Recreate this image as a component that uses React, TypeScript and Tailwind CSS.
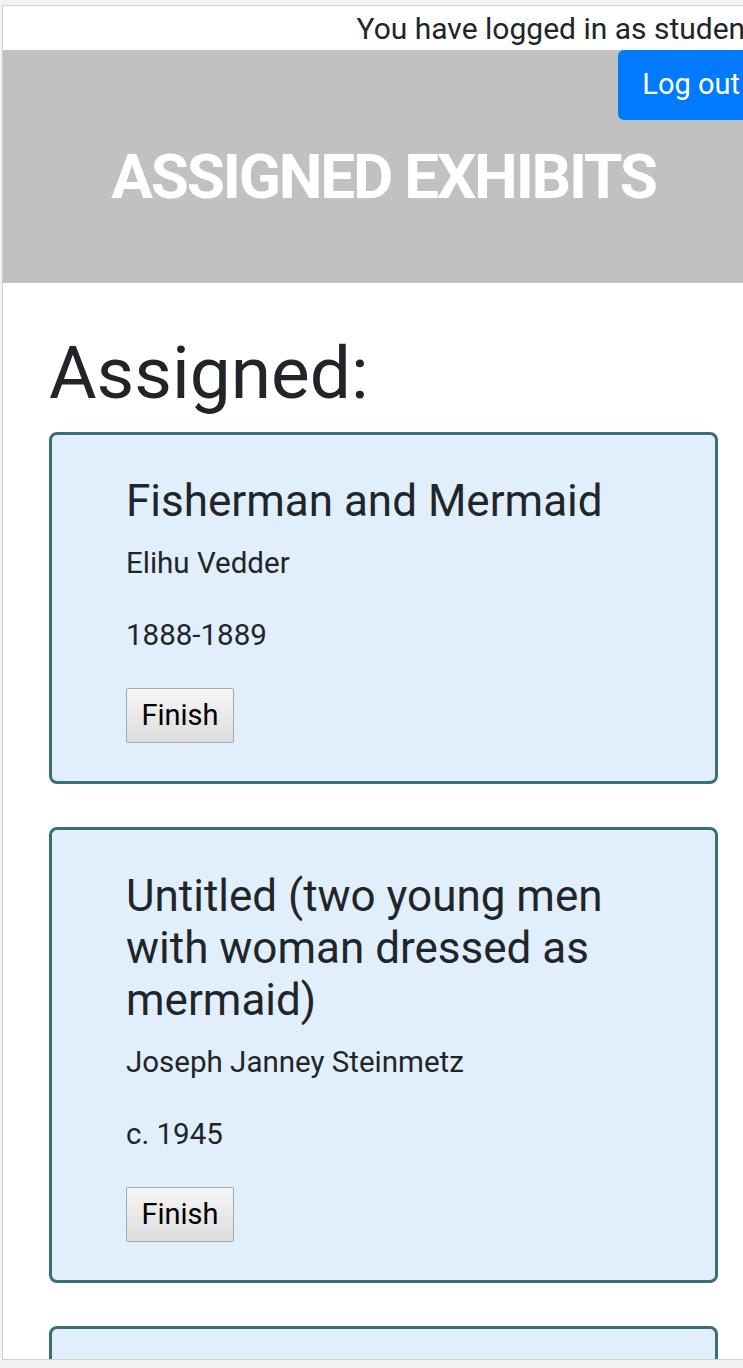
import React from "react";

interface Exhibit {
  title: string;
  artist: string;
  date: string;
}

const exhibits: Exhibit[] = [
  { title: "Fisherman and Mermaid", artist: "Elihu Vedder", date: "1888-1889" },
  {
    title: "Untitled (two young men with woman dressed as mermaid)",
    artist: "Joseph Janney Steinmetz",
    date: "c. 1945",
  },
  { title: "Mermaid", artist: "Unknown", date: "n.d." },
];

const ExhibitCard: React.FC<{ exhibit: Exhibit }> = ({ exhibit }) => (
  <div className="rounded-[8px] border-[3px] border-[#3a6e79] bg-[#e1effd] pt-[40px] pb-[38px] pl-[74px] pr-[70px]">
    <h2 className="mb-[14px] text-[44px] leading-[52px] font-normal text-[#212529]">
      {exhibit.title}
    </h2>
    <p className="mb-[28px] text-[29.5px] leading-[44px] text-[#212529]">{exhibit.artist}</p>
    <p className="mb-[31px] text-[29.5px] leading-[44px] text-[#212529]">{exhibit.date}</p>
    <button className="h-[55px] w-[108px] rounded-[2px] border border-[#a9a9a9] bg-gradient-to-b from-[#f6f6f6] to-[#dcdcdc] text-[29px] leading-none text-black">
      Finish
    </button>
  </div>
);

export default function App() {
  return (
    <div className="h-[1368px] w-[743px] overflow-hidden bg-[#f2f2f2] pt-[5px] pl-[2px] font-['Roboto',sans-serif]">
      <div className="h-[1355px] w-[763px] overflow-hidden border border-[#d0d0d0] bg-white">
        {/* top bar */}
        <div className="flex h-[44px] items-center justify-end whitespace-nowrap pr-[9px] text-[30px] text-[#212529]">
          You have logged in as student
        </div>

        {/* header */}
        <div className="flex h-[233px] flex-col bg-[#c1c1c1]">
          <div className="flex justify-end">
            <button className="h-[70px] rounded-[6px] bg-[#007bff] px-[24px] text-[29px] text-white">
              Log out
            </button>
          </div>
          <h1 className="mt-[20px] text-center text-[62px] leading-[1.2] font-bold tracking-[-2.2px] text-white">
            ASSIGNED EXHIBITS
          </h1>
        </div>

        {/* list */}
        <div className="px-[46px] pt-[47px]">
          <h1 className="mb-[14px] text-[73px] leading-[1.2] font-normal text-[#212529]">Assigned:</h1>
          <div className="flex flex-col gap-[43px]">
            {exhibits.map((ex) => (
              <ExhibitCard key={ex.title} exhibit={ex} />
            ))}
          </div>
        </div>
      </div>
    </div>
  );
}
